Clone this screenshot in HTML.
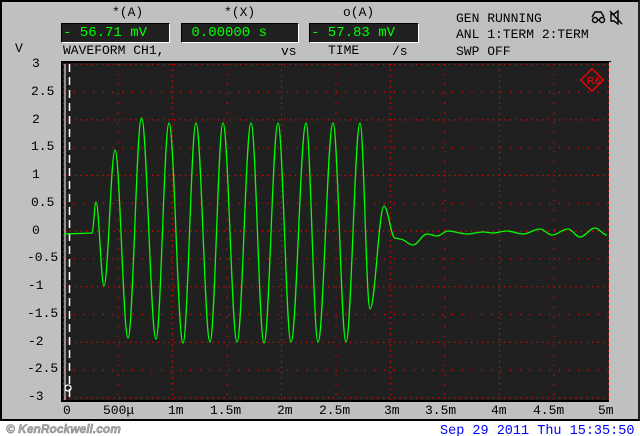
<!DOCTYPE html>
<html><head><meta charset="utf-8"><style>
*{margin:0;padding:0}
body{width:640px;height:436px;background:#fff;position:relative;overflow:hidden;font-family:"Liberation Mono",monospace;font-size:13px;color:#000}
#panel{position:absolute;left:0;top:0;width:636px;height:417px;background:#c0c0c0;border:2px solid #000;border-right-color:#222}
.t{position:absolute;white-space:pre;line-height:14px}
.box{position:absolute;top:23px;height:18px;background:#202020;border:1px solid #000;border-right:1px solid #fff;border-bottom:1px solid #fff;color:#00ff00;line-height:18px;padding-left:1px;white-space:pre;font-size:14px}
.yl{position:absolute;line-height:14px;white-space:pre}
.xl{position:absolute;top:404px;line-height:14px;white-space:pre}
</style></head><body>
<div id="panel"></div>
<div class="t" style="left:112px;top:6px">*(A)</div>
<div class="t" style="left:224px;top:6px">*(X)</div>
<div class="t" style="left:343px;top:6px">o(A)</div>
<div class="box" style="left:61px;width:106px">- 56.71 mV</div>
<div class="box" style="left:181px;width:115px"> 0.00000 s</div>
<div class="box" style="left:309px;width:107px">- 57.83 mV</div>
<div class="t" style="left:456px;top:12px">GEN RUNNING</div>
<div class="t" style="left:456px;top:28px">ANL 1:TERM 2:TERM</div>
<div class="t" style="left:456px;top:45px">SWP OFF</div>
<div class="t" style="left:63px;top:44px">WAVEFORM CH1,</div>
<div class="t" style="left:281px;top:45px">vs</div>
<div class="t" style="left:328px;top:44px">TIME</div>
<div class="t" style="left:392px;top:45px">/s</div>
<div class="t" style="left:15px;top:42px">V</div>
<svg style="position:absolute;left:591px;top:9px" width="34" height="16"><g fill="none" stroke="#000" stroke-width="1.4"><circle cx="4" cy="11" r="2.5"/><circle cx="11" cy="11" r="2.5"/><path d="M1 8l3-5h6l3 5M6 11h2"/><path d="M20 5h3l4-3v13l-4-3h-3zM19 2l12 13"/></g></svg>
<div class="yl" style="left:32px;top:57px">3</div>
<div class="yl" style="left:31px;top:85px">2.5</div>
<div class="yl" style="left:32px;top:113px">2</div>
<div class="yl" style="left:31px;top:140px">1.5</div>
<div class="yl" style="left:32px;top:168px">1</div>
<div class="yl" style="left:31px;top:196px">0.5</div>
<div class="yl" style="left:32px;top:224px">0</div>
<div class="yl" style="left:27px;top:251px">-0.5</div>
<div class="yl" style="left:28px;top:279px">-1</div>
<div class="yl" style="left:27px;top:307px">-1.5</div>
<div class="yl" style="left:28px;top:335px">-2</div>
<div class="yl" style="left:27px;top:362px">-2.5</div>
<div class="yl" style="left:28px;top:390px">-3</div>
<div class="xl" style="left:63px">0</div>
<div class="xl" style="left:103px">500μ</div>
<div class="xl" style="left:168px">1m</div>
<div class="xl" style="left:210px">1.5m</div>
<div class="xl" style="left:277px">2m</div>
<div class="xl" style="left:319px">2.5m</div>
<div class="xl" style="left:384px">3m</div>
<div class="xl" style="left:425px">3.5m</div>
<div class="xl" style="left:491px">4m</div>
<div class="xl" style="left:533px">4.5m</div>
<div class="xl" style="left:598px">5m</div>
<svg style="position:absolute;left:0;top:0" width="640" height="436">
<rect x="61" y="61" width="550" height="341" fill="#000"/>
<rect x="63" y="63" width="546" height="337" fill="#202020"/>
<line x1="610" y1="62" x2="610" y2="402" stroke="#fff" stroke-width="1.5"/>
<g id="grid" stroke="#ff0000" stroke-width="1.2"></g>
<g transform="translate(592,80)"><rect x="-8" y="-8" width="16" height="16" transform="rotate(45)" fill="none" stroke="#ff0000" stroke-width="1.3"/><text x="-5" y="4" font-size="10" fill="#ff0000" font-family="Liberation Sans,sans-serif">R&amp;</text></g>
<line x1="65" y1="64" x2="65" y2="400" stroke="#fff" stroke-width="1"/>
<line x1="69.5" y1="64" x2="69.5" y2="400" stroke="#fff" stroke-width="1.5" stroke-dasharray="8,5"/>
<circle cx="68" cy="388" r="3" fill="none" stroke="#fff" stroke-width="1.3"/>
<path id="wave" fill="none" stroke="#00ff00" stroke-width="1.3"/>
<text x="6" y="433" font-family="Liberation Sans,sans-serif" font-weight="bold" font-style="italic" font-size="12" fill="#aaa" stroke="#777" stroke-width="0.4">© KenRockwell.com</text>
<text x="440" y="434" font-family="Liberation Mono,monospace" font-size="13.5" fill="#0000ff">Sep 29 2011 Thu 15:35:50</text>
</svg>
<script>
var g=document.getElementById('grid'),s='';
for(var i=0;i<=10;i++){var x=63.5+i*54.5;var maj=(i%2==0);s+='<line x1="'+x+'" y1="64" x2="'+x+'" y2="400" stroke-dasharray="'+(maj?'1.2,4.3':'1.2,8.5')+'"/>';}
for(var j=0;j<=12;j++){var y=64.3+j*27.8;var maj=(j%2==0);s+='<line x1="64" y1="'+y+'" x2="609" y2="'+y+'" stroke-dasharray="'+(maj?'1.2,4.3':'1.2,8.5')+'"/>';}
g.innerHTML=s;
var p=[[64,234],[92,233],[96,202],[104,286],[115,150],[128,338],[141.5,118],[156,339],[169,123],[183,343],[196,123],[210,342],[223,123],[237,342],[251,123],[264,343],[278,123],[291,342],[306,123],[318,342],[333,123],[346,342],[360,123],[370,309],[384,206],[395,238],[400,239],[413,245],[427,234],[437,236],[448,231],[467,234],[483,232],[493,233],[507,231],[523,234],[540,229],[552,235],[568,229],[580,237],[595,228],[607,235]];
var d='M'+p[0][0]+' '+p[0][1]+' L'+p[1][0]+' '+p[1][1];
for(var k=2;k<p.length;k++){var a=p[k-1],b=p[k],dx=(b[0]-a[0])*0.37;d+=' C'+(a[0]+dx)+' '+a[1]+' '+(b[0]-dx)+' '+b[1]+' '+b[0]+' '+b[1];}
document.getElementById('wave').setAttribute('d',d);
</script>
</body></html>
